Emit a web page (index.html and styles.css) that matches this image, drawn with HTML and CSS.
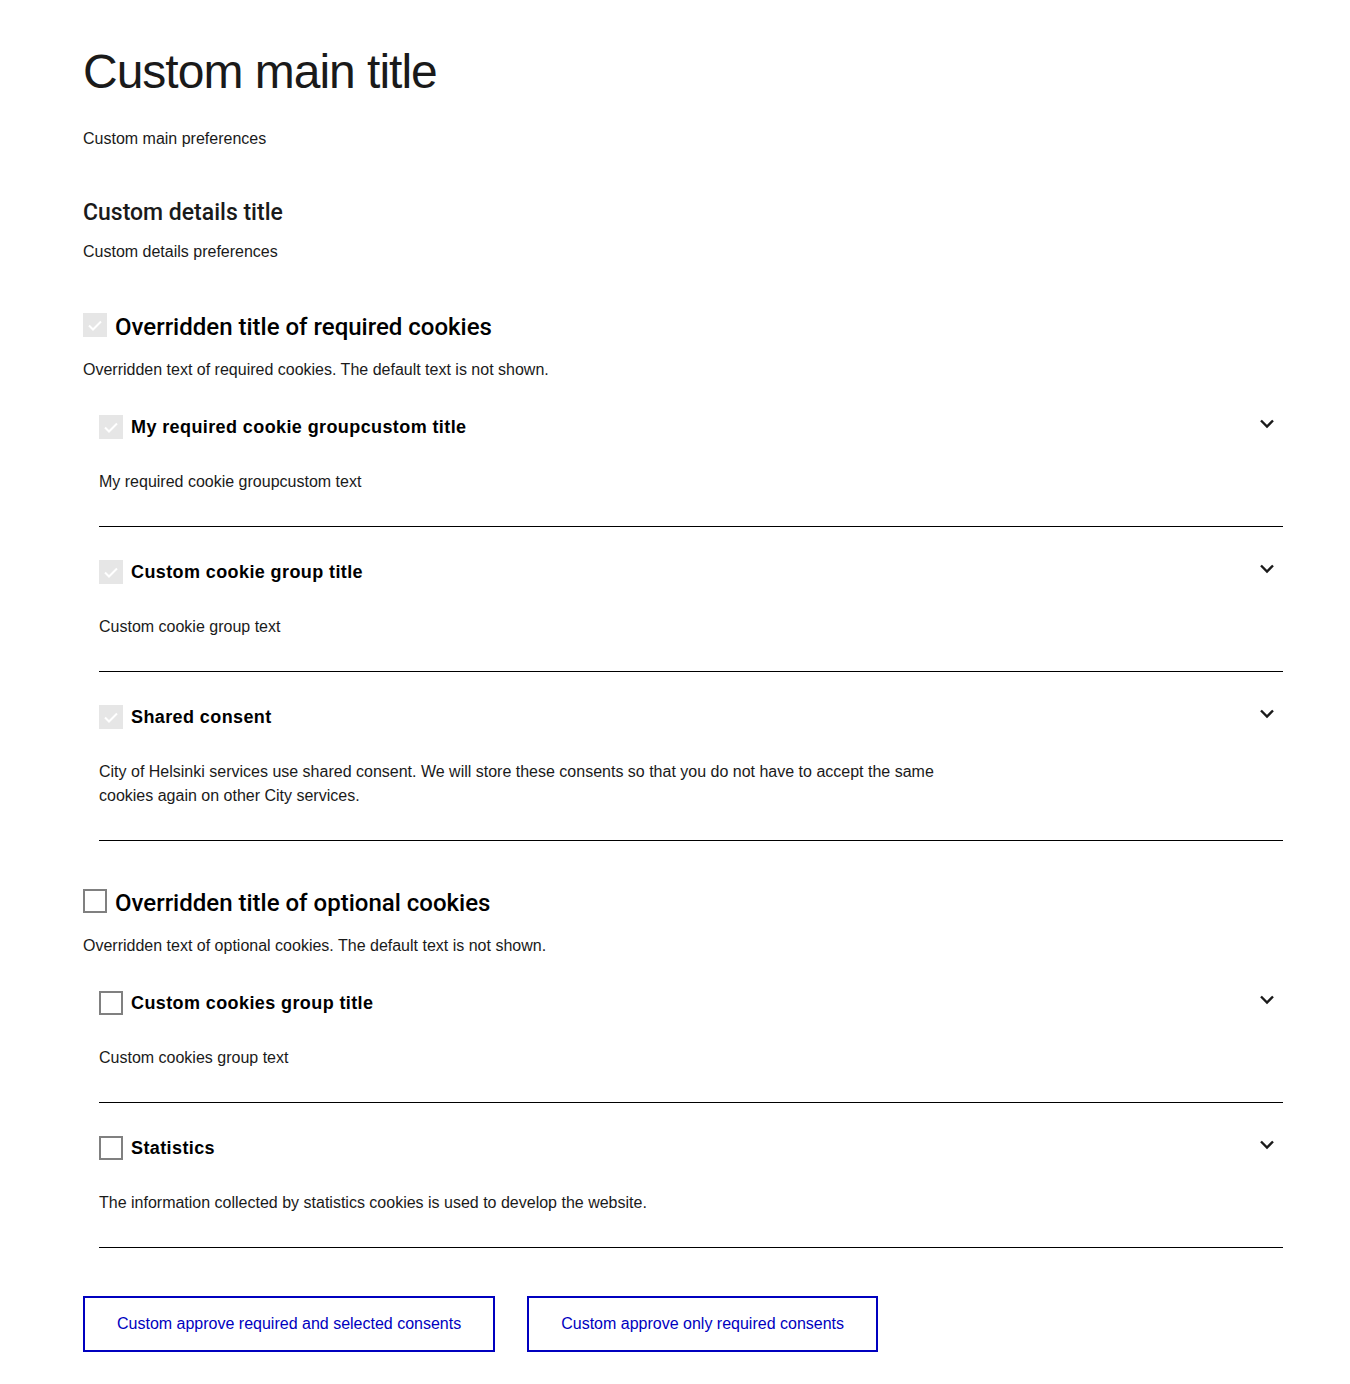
FILE: index.html
```html
<!DOCTYPE html>
<html lang="en">
<head>
<meta charset="utf-8">
<title>Cookie settings</title>
<link rel="stylesheet" href="styles.css">
</head>
<body>
<main class="page">
  <h1 class="main-title">Custom main title</h1>
  <p class="lead">Custom main preferences</p>
  <h2 class="details-title">Custom details title</h2>
  <p class="lead">Custom details preferences</p>

  <section class="category">
    <div class="cat-head">
      <span class="cb cb-disabled"><svg viewBox="0 0 24 24"><path d="M6 12.5l4 4 8-8" /></svg></span>
      <h3 class="cat-title">Overridden title of required cookies</h3>
    </div>
    <p class="cat-text">Overridden text of required cookies. The default text is not shown.</p>

    <div class="group">
      <div class="group-head">
        <span class="cb cb-disabled"><svg viewBox="0 0 24 24"><path d="M6 12.5l4 4 8-8" /></svg></span>
        <h4 class="group-title">My required cookie groupcustom title</h4>
        <span class="chev"><svg viewBox="0 0 24 24"><path d="M6 9.5l6 6 6-6" /></svg></span>
      </div>
      <p class="group-text">My required cookie groupcustom text</p>
    </div>
    <div class="group">
      <div class="group-head">
        <span class="cb cb-disabled"><svg viewBox="0 0 24 24"><path d="M6 12.5l4 4 8-8" /></svg></span>
        <h4 class="group-title">Custom cookie group title</h4>
        <span class="chev"><svg viewBox="0 0 24 24"><path d="M6 9.5l6 6 6-6" /></svg></span>
      </div>
      <p class="group-text">Custom cookie group text</p>
    </div>
    <div class="group">
      <div class="group-head">
        <span class="cb cb-disabled"><svg viewBox="0 0 24 24"><path d="M6 12.5l4 4 8-8" /></svg></span>
        <h4 class="group-title">Shared consent</h4>
        <span class="chev"><svg viewBox="0 0 24 24"><path d="M6 9.5l6 6 6-6" /></svg></span>
      </div>
      <p class="group-text narrow">City of Helsinki services use shared consent. We will store these consents so that you do not have to accept the same cookies again on other City services.</p>
    </div>
  </section>

  <section class="category">
    <div class="cat-head">
      <span class="cb cb-empty"></span>
      <h3 class="cat-title">Overridden title of optional cookies</h3>
    </div>
    <p class="cat-text">Overridden text of optional cookies. The default text is not shown.</p>

    <div class="group">
      <div class="group-head">
        <span class="cb cb-empty"></span>
        <h4 class="group-title">Custom cookies group title</h4>
        <span class="chev"><svg viewBox="0 0 24 24"><path d="M6 9.5l6 6 6-6" /></svg></span>
      </div>
      <p class="group-text">Custom cookies group text</p>
    </div>
    <div class="group">
      <div class="group-head">
        <span class="cb cb-empty"></span>
        <h4 class="group-title">Statistics</h4>
        <span class="chev"><svg viewBox="0 0 24 24"><path d="M6 9.5l6 6 6-6" /></svg></span>
      </div>
      <p class="group-text">The information collected by statistics cookies is used to develop the website.</p>
    </div>
  </section>

  <div class="actions">
    <button class="btn" type="button">Custom approve required and selected consents</button>
    <button class="btn" type="button">Custom approve only required consents</button>
  </div>
</main>
</body>
</html>
```

FILE: styles.css
```css
* { box-sizing: border-box; }
html, body { margin: 0; padding: 0; background: #fff; }
body {
  font-family: "Liberation Sans", Arial, sans-serif;
  color: #1a1a1a;
}
.page {
  width: 1200px;
  margin-left: 83px;
  padding-top: 44px;
  padding-bottom: 32px;
}
.main-title {
  margin: 0;
  font-size: 48px;
  line-height: 56px;
  font-weight: 400;
  letter-spacing: -1px;
  color: #1a1a1a;
}
.lead {
  margin: 27px 0 0;
  font-size: 16px;
  line-height: 24px;
}
.details-title {
  margin: 46px 0 0;
  font-family: Roboto, "Liberation Sans", Arial, sans-serif;
  font-size: 23px;
  line-height: 32px;
  font-weight: 500;
  color: #1a1a1a;
}
.details-title + .lead { margin-top: 11px; }

.category { margin-top: 49px; }
.category + .category { margin-top: 48px; }
.cat-head {
  display: flex;
  align-items: center;
  gap: 8px;
  height: 24px;
}
.cat-title {
  margin: 0;
  font-family: Roboto, "Liberation Sans", Arial, sans-serif;
  font-size: 24px;
  line-height: 32px;
  font-weight: 500;
  color: #000;
  position: relative;
  top: 2px;
}
.cat-text {
  margin: 21px 0 0;
  font-size: 16px;
  line-height: 24px;
}

.cb {
  flex: 0 0 24px;
  width: 24px;
  height: 24px;
  display: inline-flex;
  align-items: center;
  justify-content: center;
}
.cb svg { width: 24px; height: 24px; }
.cb svg path { fill: none; stroke: #fff; stroke-width: 2; }
.cb-disabled { background: #e6e6e6; }
.cb-empty { border: 2px solid #808080; background: #fff; }

.group {
  margin-left: 16px;
  padding: 33px 0 32px;
  border-bottom: 1px solid #000;
}
.group-head {
  display: flex;
  align-items: center;
  gap: 8px;
  height: 24px;
}
.group-title {
  margin: 0;
  flex: 1;
  font-size: 18px;
  line-height: 24px;
  font-weight: 700;
  letter-spacing: 0.4px;
  color: #000;
}
.chev {
  width: 24px;
  height: 24px;
  margin-right: 4px;
  margin-top: -9px;
}
.chev svg { width: 24px; height: 24px; display: block; }
.chev svg path { fill: none; stroke: #1a1a1a; stroke-width: 2.4; }
.group-text {
  margin: 31px 0 0;
  font-size: 16px;
  line-height: 24px;
}
.group-text.narrow { max-width: 860px; }

.actions {
  display: flex;
  gap: 32px;
  margin-top: 48px;
}
.btn {
  height: 56px;
  padding: 0 32px;
  border: 2px solid #0000bf;
  background: #fff;
  color: #0000bf;
  font-family: "Liberation Sans", Arial, sans-serif;
  font-size: 16px;
  font-weight: 500;
  cursor: pointer;
}
```
